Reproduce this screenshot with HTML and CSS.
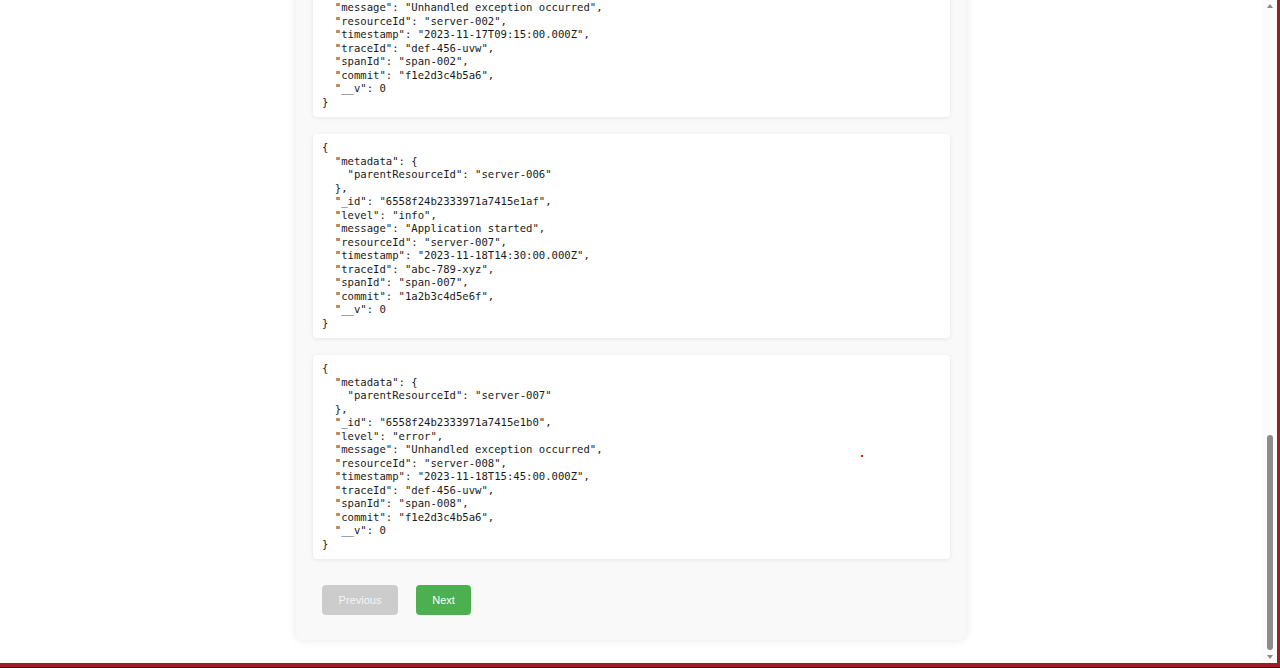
FILE: index.html
```html
<!DOCTYPE html>
<html lang="en">
<head>
<meta charset="utf-8">
<title>Logs</title>
<link rel="stylesheet" href="styles.css">
</head>
<body>
<div class="window">
  <div class="frame">
    <div class="viewport">
      <main class="logs">
        <div class="log-card"><pre>{
  "metadata": {
    "parentResourceId": "server-005"
  },
  "_id": "6558f24b2333971a7415e1ae",
  "level": "info",
  "message": "Application started",
  "resourceId": "server-006",
  "timestamp": "2023-11-17T08:00:00.000Z",
  "traceId": "abc-789-xyz",
  "spanId": "span-006",
  "commit": "1a2b3c4d5e6f",
  "__v": 0
}</pre></div>
        <div class="log-card"><pre>{
  "metadata": {
    "parentResourceId": "server-001"
  },
  "_id": "6558f24b2333971a7415e1ad",
  "level": "error",
  "message": "Unhandled exception occurred",
  "resourceId": "server-002",
  "timestamp": "2023-11-17T09:15:00.000Z",
  "traceId": "def-456-uvw",
  "spanId": "span-002",
  "commit": "f1e2d3c4b5a6",
  "__v": 0
}</pre></div>
        <div class="log-card"><pre>{
  "metadata": {
    "parentResourceId": "server-006"
  },
  "_id": "6558f24b2333971a7415e1af",
  "level": "info",
  "message": "Application started",
  "resourceId": "server-007",
  "timestamp": "2023-11-18T14:30:00.000Z",
  "traceId": "abc-789-xyz",
  "spanId": "span-007",
  "commit": "1a2b3c4d5e6f",
  "__v": 0
}</pre></div>
        <div class="log-card"><pre>{
  "metadata": {
    "parentResourceId": "server-007"
  },
  "_id": "6558f24b2333971a7415e1b0",
  "level": "error",
  "message": "Unhandled exception occurred",
  "resourceId": "server-008",
  "timestamp": "2023-11-18T15:45:00.000Z",
  "traceId": "def-456-uvw",
  "spanId": "span-008",
  "commit": "f1e2d3c4b5a6",
  "__v": 0
}</pre><span class="dot"></span></div>
        <div class="pager">
          <button class="btn btn-prev" disabled>Previous</button>
          <button class="btn btn-next">Next</button>
        </div>
      </main>
    </div>
    <div class="scrollbar">
      <span class="arrow arrow-up"></span>
      <div class="track"><span class="thumb"></span></div>
      <span class="arrow arrow-down"></span>
    </div>
  </div>
</div>
</body>
</html>
```

FILE: styles.css
```css
html, body {
  margin: 0;
  padding: 0;
}

body {
  width: 1280px;
  height: 668px;
  overflow: hidden;
  background: #ffffff;
  font-family: "Liberation Sans", Arial, sans-serif;
}

.window {
  width: 1280px;
  height: 668px;
  box-sizing: border-box;
  border-bottom: 1px solid #3c0a0e;
  display: flex;
}

.frame {
  flex: 1;
  display: flex;
  min-height: 0;
  border-right: 3px solid #a11b26;
  border-bottom: 4px solid #a11b26;
  background: #ffffff;
}

.viewport {
  flex: 1;
  min-width: 0;
  overflow: hidden;
  display: flex;
  flex-direction: column;
  justify-content: flex-end;
  align-items: center;
  padding-bottom: 23px;
}

.logs {
  flex: none;
  width: 670px;
  box-sizing: border-box;
  padding: 17px 16px 25px 17px;
  background: #f9f9f9;
  border-radius: 8px;
  box-shadow: 0 0 10px rgba(0, 0, 0, 0.1);
  display: flex;
  flex-direction: column;
  gap: 17px;
}

.log-card {
  position: relative;
  background: #ffffff;
  border-radius: 4px;
  box-shadow: 0 1px 4px rgba(0, 0, 0, 0.08);
  padding: 7px 9px 8px;
}

.log-card pre {
  margin: 0;
  font-family: "DejaVu Sans Mono", "Liberation Mono", monospace;
  font-size: 10.6px;
  line-height: 13.5px;
  color: #1a1a1a;
}

.dot {
  position: absolute;
  left: 548px;
  top: 100px;
  width: 2px;
  height: 2px;
  background: #e01010;
}

.pager {
  display: flex;
  gap: 18px;
  padding: 9px 9px 0;
}

.btn {
  height: 30px;
  padding: 0 16px;
  border: none;
  border-radius: 4px;
  font-family: "Liberation Sans", Arial, sans-serif;
  font-size: 11px;
  color: #ffffff;
  cursor: pointer;
}

.btn-prev {
  background: #cccccc;
  color: #f4f4f4;
  width: 76px;
}

.btn-next {
  background: #4caf50;
  width: 55px;
}

.scrollbar {
  flex: none;
  width: 15px;
  display: flex;
  flex-direction: column;
  align-items: center;
  background: #fbfbfb;
  padding: 2px 0;
  box-sizing: border-box;
}

.arrow {
  flex: none;
  width: 0;
  height: 0;
  border-left: 3px solid transparent;
  border-right: 3px solid transparent;
  margin: 2px 0;
}

.arrow-up {
  border-bottom: 4px solid #8a8a8a;
}

.arrow-down {
  border-top: 4px solid #8a8a8a;
}

.track {
  flex: 1;
  width: 100%;
  display: flex;
  flex-direction: column;
  justify-content: flex-end;
  align-items: center;
  padding-bottom: 3px;
  box-sizing: border-box;
}

.thumb {
  width: 6px;
  height: 215px;
  border-radius: 3px;
  background: #8c8c8c;
}
```
